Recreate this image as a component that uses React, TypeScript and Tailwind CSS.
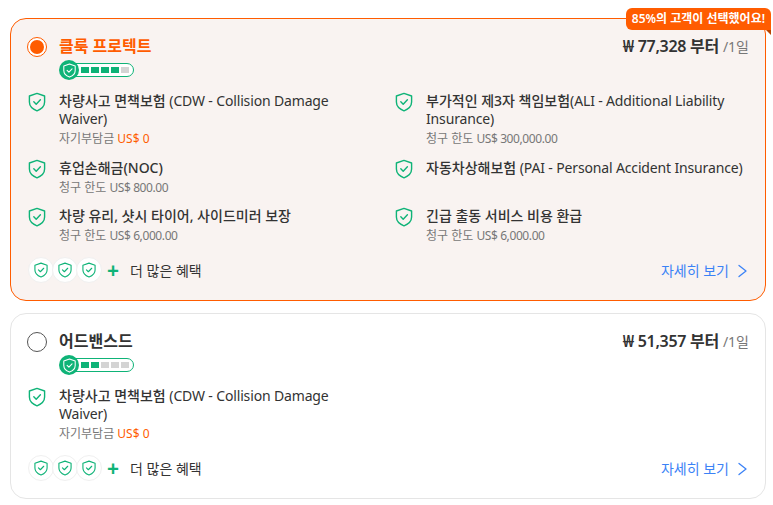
const FONT = "font-['Noto_Sans','Noto_Sans_CJK_KR',sans-serif]";

const ShieldIcon = ({ className = "w-5 h-5" }: { className?: string }) => (
  <svg viewBox="0 0 20 20" fill="none" className={className}>
    <path
      d="M10 1.400 17.600 4V10c0 4.200-3 7-7.600 8.800C5.400 17 2.400 14.200 2.400 10V4L10 1.400Z"
      stroke="currentColor"
      strokeWidth="1.400"
      strokeLinejoin="round"
    />
    <path d="M6.800 9.800 9.200 12.200 13.400 7.800" stroke="currentColor" strokeWidth="1.400" strokeLinecap="round" strokeLinejoin="round" />
  </svg>
);

const Level = ({ level }: { level: number }) => (
  <div className="flex items-center h-5 mt-[3px]">
    <div className="z-10 w-5 h-5 rounded-full bg-[#0eb377] text-white flex items-center justify-center shrink-0">
      <ShieldIcon className="w-[15px] h-[15px]" />
    </div>
    <div className="-ml-[4px] w-[59px] h-[14px] rounded-r-full border border-[#0eb377] bg-white flex items-center gap-[2px] pl-[5px]">
      {[0, 1, 2, 3, 4].map((i) => (
        <span key={i} className={i < level ? "w-2 h-[6px] bg-[#0eb377]" : "w-2 h-[6px] bg-[#d4d4d4]"} />
      ))}
    </div>
  </div>
);

type BenefitProps = { title: string; latin?: string; wrapped?: string; sub?: string; amount?: string; accent?: string };

const Benefit = ({ title, latin, wrapped, sub, amount, accent }: BenefitProps) => (
  <div className="flex gap-3">
    <ShieldIcon className="w-5 h-5 text-[#0eb377] shrink-0" />
    <div className="min-w-0">
      <p className="text-[14px] leading-[18px] font-medium text-[#333]">
        {title}
        {latin && <span className="font-normal tracking-[-0.15px]">{latin}</span>}
        {wrapped && <span className="block font-normal tracking-[-0.15px]">{wrapped}</span>}
      </p>
      {sub && (
        <p className="text-[12px] leading-[18px] mt-[2px] text-[#777]">
          {sub} {amount && <span className="tracking-[-0.4px]">{amount}</span>}
          {accent && <span className="text-[#ff5c00]">{accent}</span>}
        </p>
      )}
    </div>
  </div>
);

const Footer = () => (
  <div className="flex items-center justify-between mt-3">
    <div className="flex items-center">
      <div className="flex ml-[1px]">
        {[0, 1, 2].map((i) => (
          <span
            key={i}
            className={(i > 0 ? "-ml-[2px] " : "") + "w-[26px] h-[26px] rounded-full bg-white border border-[#f0f0f0] flex items-center justify-center text-[#0eb377]"}
          >
            <ShieldIcon className="w-[16px] h-[16px]" />
          </span>
        ))}
      </div>
      <span className="ml-[5px] w-[11px] text-center text-[#0eb377] text-[21px] leading-none font-bold">+</span>
      <span className="ml-[12px] text-[14px] text-[#333]">더 많은 혜택</span>
    </div>
    <div className="flex items-center gap-[7px] text-[14px] text-[#3b82f6]">
      자세히 보기
      <svg viewBox="0 0 12 14" fill="none" className="w-[13px] h-[14px] mt-[2px]">
        <path d="M2.500 1.500 9.500 7 2.500 12.500" stroke="currentColor" strokeWidth="1.300" strokeLinecap="round" strokeLinejoin="round" />
      </svg>
    </div>
  </div>
);

const Price = ({ value }: { value: string }) => (
  <div className="flex items-baseline gap-[4px] -mt-[1px]">
    <span className="text-[16px] font-semibold tracking-[-0.3px] text-[#333]">₩ {value} 부터</span>
    <span className="text-[14px] text-[#777]">/1일</span>
  </div>
);

const CDW = () => <Benefit title="차량사고 면책보험 " latin="(CDW - Collision Damage" wrapped="Waiver)" sub="자기부담금" accent="US$ 0" />;

export default function App() {
  return (
    <div className={FONT + " w-[773px] h-[505px] bg-white pl-[10px] pt-[18px]"}>
      {/* selected plan */}
      <div className="relative w-[756px] h-[283px] rounded-[16px] border border-[#ff5c00] bg-[#f9f3f1] px-4 pt-4">
        <div className="absolute -top-[11px] -right-[6px] h-[22px] px-[6px] rounded-[6px] rounded-br-none bg-[#ff5c00] text-white text-[12px] leading-[22px] font-semibold">
          85%의 고객이 선택했어요!
          <span className="absolute top-[22px] right-0 w-0 h-0 border-t-[5px] border-l-[5px] border-t-[#b84300] border-l-transparent" />
        </div>
        <div className="flex justify-between">
          <div className="flex gap-3">
            <span className="w-5 h-5 mt-[2px] rounded-full border border-[#ff5c00] bg-white flex items-center justify-center">
              <span className="w-[14px] h-[14px] rounded-full bg-[#ff5c00]" />
            </span>
            <div>
              <h3 className="text-[16px] leading-[22px] font-semibold text-[#ff5c00]">클룩 프로텍트</h3>
              <Level level={4} />
            </div>
          </div>
          <Price value="77,328" />
        </div>
        <div className="grid grid-cols-2 gap-x-3 gap-y-[10.5px] mt-3">
          <CDW />
          <Benefit title="부가적인 제3자 책임보험" latin="(ALI - Additional Liability" wrapped="Insurance)" sub="청구 한도" amount="US$ 300,000.00" />
          <Benefit title="휴업손해금(NOC)" sub="청구 한도" amount="US$ 800.00" />
          <Benefit title="자동차상해보험 " latin="(PAI - Personal Accident Insurance)" />
          <Benefit title="차량 유리, 샷시 타이어, 사이드미러 보장" sub="청구 한도" amount="US$ 6,000.00" />
          <Benefit title="긴급 출동 서비스 비용 환급" sub="청구 한도" amount="US$ 6,000.00" />
        </div>
        <Footer />
      </div>

      {/* second plan */}
      <div className="w-[756px] mt-3 h-[186px] rounded-[16px] border border-[#e5e5e5] bg-white px-4 pt-4">
        <div className="flex justify-between">
          <div className="flex gap-3">
            <span className="w-5 h-5 mt-[2px] rounded-full border border-[#555] bg-white" />
            <div>
              <h3 className="text-[16px] leading-[22px] font-semibold text-[#333]">어드밴스드</h3>
              <Level level={2} />
            </div>
          </div>
          <Price value="51,357" />
        </div>
        <div className="grid grid-cols-2 gap-x-3 mt-3">
          <CDW />
        </div>
        <Footer />
      </div>
    </div>
  );
}
